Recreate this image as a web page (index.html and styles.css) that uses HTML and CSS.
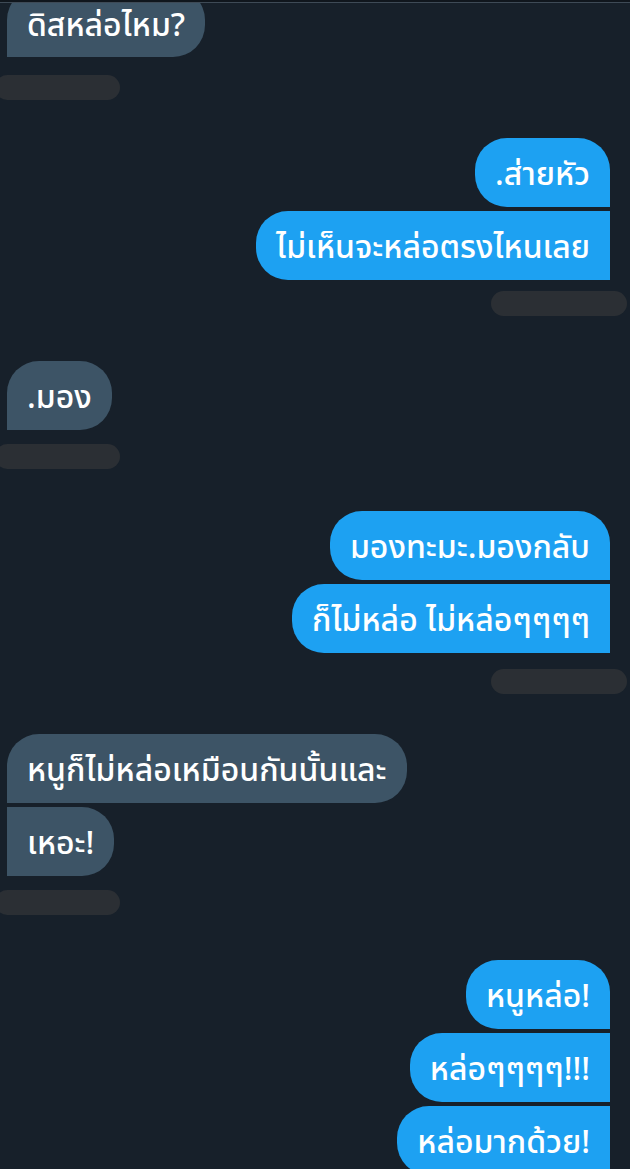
FILE: index.html
```html
<!DOCTYPE html>
<html lang="th">
<head>
    <meta charset="UTF-8">
    <meta name="viewport" content="width=device-width, initial-scale=1.0">
    <title>แชท</title>
    <link rel="stylesheet" href="styles.css">
</head>
<body>
    <div class="top-line"></div>
    <div class="chat">
        <!-- ข้อความที่ได้รับ -->
        <div class="group in first">
            <div class="bubble">ดิสหล่อไหม?</div>
            <div class="time"></div>
        </div>

        <div class="group out g2">
            <div class="bubble">.ส่ายหัว</div>
            <div class="bubble">ไม่เห็นจะหล่อตรงไหนเลย</div>
            <div class="time"></div>
        </div>

        <div class="group in g3">
            <div class="bubble">.มอง</div>
            <div class="time"></div>
        </div>

        <div class="group out g4">
            <div class="bubble">มองทะมะ.มองกลับ</div>
            <div class="bubble">ก็ไม่หล่อ ไม่หล่อๆๆๆๆ</div>
            <div class="time"></div>
        </div>

        <div class="group in g5">
            <div class="bubble">หนูก็ไม่หล่อเหมือนกันนั้นและ</div>
            <div class="bubble">เหอะ!</div>
            <div class="time"></div>
        </div>

        <div class="group out">
            <div class="bubble">หนูหล่อ!</div>
            <div class="bubble">หล่อๆๆๆๆ!!!</div>
            <div class="bubble">หล่อมากด้วย!</div>
        </div>
    </div>
</body>
</html>
```

FILE: styles.css
```css
body {
    margin: 0;
    background-color: #17202a;
    font-family: "Noto Sans Thai", "Noto Sans", "DejaVu Sans", sans-serif;
    color: #ffffff;
    height: 1169px;
    overflow: hidden;
}
.top-line {
    height: 2px;
    background-color: #10161d;
    border-bottom: 1px solid #3e4a56;
}
.chat {
    height: 1166px;
    overflow: hidden;
    padding: 0 20px 0 7px;
}
.group {
    display: flex;
    flex-direction: column;
    gap: 4px;
    margin-bottom: 42px;
}
.bubble {
    height: 69px;
    box-sizing: border-box;
    padding: 5px 20px 0;
    display: flex;
    align-items: center;
    font-size: 32px;
    font-weight: 500;
    line-height: 1.2;
    white-space: nowrap;
    border-radius: 32px;
}
.in {
    align-items: flex-start;
}
.in .bubble {
    background-color: #3d5466;
    border-bottom-left-radius: 0;
}
.in .bubble + .bubble {
    border-top-left-radius: 0;
}
.out {
    align-items: flex-end;
}
.out .bubble {
    background-color: #1da1f2;
    border-bottom-right-radius: 0;
}
.out .bubble + .bubble {
    border-top-right-radius: 0;
}
.time {
    height: 25px;
    border-radius: 13px;
    background-color: #2b2f34;
}
.in .time {
    width: 125px;
    margin: 10px 0 0 -12px;
}
.out .time {
    width: 136px;
    margin: 7px -17px 0 0;
}

/* ระยะห่างของแต่ละกลุ่มไม่เท่ากันในภาพจริง */
.first {
    margin-top: -15px;
    margin-bottom: 38px;
}
.first .bubble {
    padding-top: 8px;
}
.first .time {
    margin-top: 14px;
}
.g2 {
    margin-bottom: 45px;
}
.g4 {
    margin-bottom: 40px;
}
.g4 .time {
    margin-top: 12px;
}
.g5 {
    margin-bottom: 45px;
}
```
